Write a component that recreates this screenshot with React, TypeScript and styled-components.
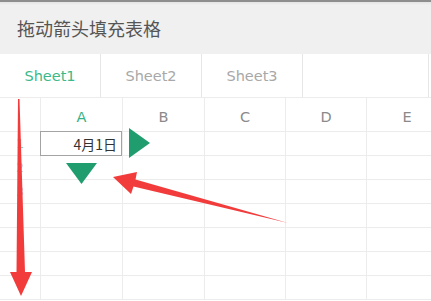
import React from 'react';
import styled, { createGlobalStyle } from 'styled-components';

const GlobalStyle = createGlobalStyle`
  html, body {
    margin: 0;
    padding: 0;
    background: #ffffff;
    overflow: hidden;
  }
  body {
    font-family: "DejaVu Sans", "Noto Sans CJK SC", sans-serif;
  }
`;

const GREEN = '#1f9d6e';
const RED = '#f23c3c';
const LINE = '#ececec';

const Page = styled.div`
  position: relative;
  width: 431px;
  height: 301px;
  overflow: hidden;
  background: #fff;
`;

const TitleBar = styled.div`
  height: 52px;
  border-top: 2px solid #8e8e8e;
  background: linear-gradient(#e4e4e4 0, #f0f0f0 3px, #f0f0f0 100%);
  display: flex;
  align-items: center;
  padding-left: 17px;
  font-family: "Noto Sans CJK SC", sans-serif;
  font-size: 18px;
  color: #555;
`;

const TabBar = styled.div`
  display: flex;
  height: 43px;
  border-bottom: 1px solid ${LINE};
`;

const Tab = styled.div<{ active?: boolean; wide?: boolean }>`
  width: ${p => (p.wide ? '125px' : '100px')};
  border-right: 1px solid #e6e6e6;
  display: flex;
  align-items: center;
  justify-content: center;
  font-family: "DejaVu Sans", sans-serif;
  font-size: 14.5px;
  color: ${p => (p.active ? '#3cb98a' : '#a8a8a8')};
`;

const Grid = styled.div`
  display: grid;
  grid-template-columns: 41px 82px 82px 81px 81px 81px;
  grid-template-rows: 34px repeat(7, 24px);
`;

const Cell = styled.div<{ head?: boolean }>`
  border-right: 1px solid ${LINE};
  border-bottom: 1px solid ${LINE};
  display: flex;
  align-items: center;
  justify-content: center;
  font-family: "DejaVu Sans", sans-serif;
  font-size: ${p => (p.head ? '14.5px' : '13px')};
`;

const ColHead = styled(Cell)<{ active?: boolean }>`
  color: ${p => (p.active ? '#35b386' : '#8a8a8a')};
  padding-top: 4px;
`;

const RowHead = styled(Cell)<{ active?: boolean }>`
  color: ${p => (p.active ? '#7cc9ad' : '#c4c4c4')};
  font-size: 12px;
`;

const ActiveCell = styled(Cell)`
  position: relative;
`;

const Selection = styled.div`
  position: absolute;
  left: -1px;
  top: -1px;
  right: 0;
  bottom: -1px;
  border: 1.5px solid #a3a3a3;
  display: flex;
  align-items: center;
  justify-content: flex-end;
  padding-right: 4px;
  font-family: "Noto Sans CJK SC", sans-serif;
  font-size: 14px;
  color: #333;
  background: #fff;
`;

const Overlay = styled.svg`
  position: absolute;
  left: 0;
  top: 0;
  pointer-events: none;
`;

const cols = ['A', 'B', 'C', 'D', 'E'];

export default function App() {
  return (
    <>
      <GlobalStyle />
      <Page>
        <TitleBar>拖动箭头填充表格</TitleBar>
        <TabBar>
          <Tab active>Sheet1</Tab>
          <Tab>Sheet2</Tab>
          <Tab>Sheet3</Tab>
          <Tab wide />
        </TabBar>
        <Grid>
          <Cell head />
          {cols.map((c, i) => (
            <ColHead head key={c} active={i === 0}>{c}</ColHead>
          ))}
          {Array.from({ length: 7 }).map((_, r) => (
            <React.Fragment key={r}>
              <RowHead active={r === 0}>{r < 3 ? r + 1 : ''}</RowHead>
              {cols.map((c, i) =>
                r === 0 && i === 0 ? (
                  <ActiveCell key={c}>
                    <Selection>4月1日</Selection>
                  </ActiveCell>
                ) : (
                  <Cell key={c} />
                )
              )}
            </React.Fragment>
          ))}
        </Grid>
        <Overlay width="431" height="301" viewBox="0 0 431 301">
          {/* fill handles */}
          <polygon points="129,128 129,158 150,143" fill={GREEN} />
          <polygon points="66,163 97,163 81.5,184" fill={GREEN} />
          {/* red annotation arrows */}
          <polygon
            points="113,177 137,172 135.5,179.5 288,223 133.5,186.5 131,194"
            fill={RED}
          />
          <polygon
            points="18,99 19.5,99 25,272 32,272 21,296 10,272 16.5,272"
            fill={RED}
          />
        </Overlay>
      </Page>
    </>
  );
}
